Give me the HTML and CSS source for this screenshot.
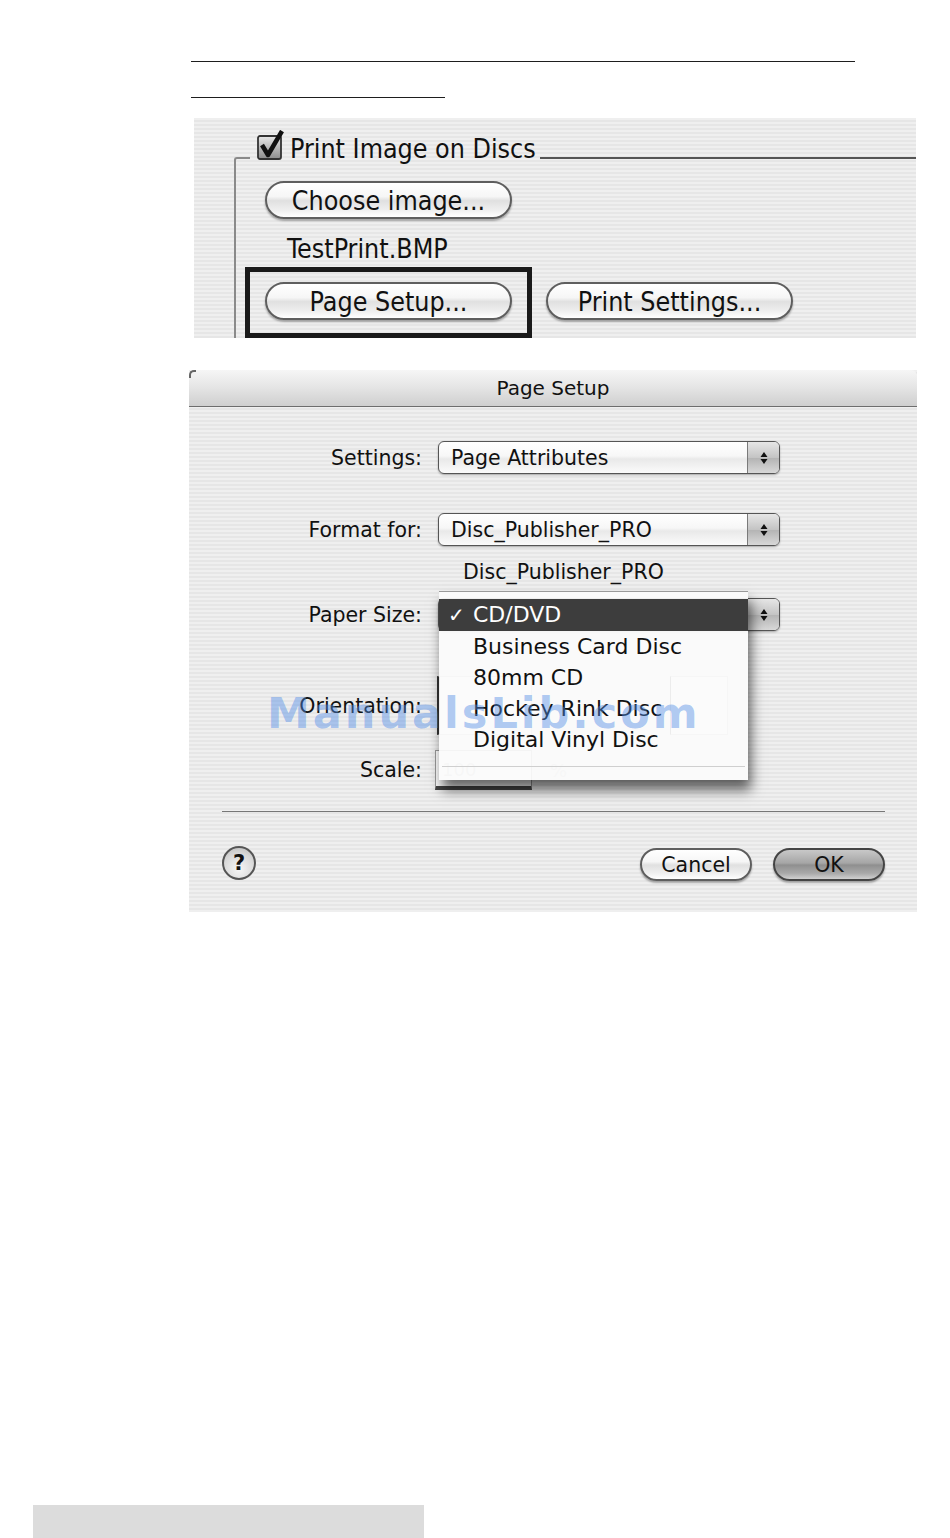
FILE: index.html
```html
<!DOCTYPE html>
<html lang="en">

<head>
    <meta charset="UTF-8">
    <meta name="viewport" content="width=device-width, initial-scale=1.0">
    <title>Print Image on Discs - Page Setup</title>
    <link rel="stylesheet" href="styles.css">
</head>

<body>
    <div class="page">
        <div class="rule rule-long"></div>
        <div class="rule rule-short"></div>

        <!-- first screenshot: print panel -->
        <div class="shot shot-print">
            <div class="group-head">
                <span class="group-corner"></span>
                <span class="checkbox">
                    <svg width="28" height="30" viewBox="0 0 28 30">
                        <defs>
                            <linearGradient id="cbFill" x1="0" y1="0" x2="0" y2="1">
                                <stop offset="0" stop-color="#e8e8e8" />
                                <stop offset="0.5" stop-color="#b9b9b9" />
                                <stop offset="1" stop-color="#8c8c8c" />
                            </linearGradient>
                        </defs>
                        <rect x="1" y="6" width="23" height="23" rx="2" fill="url(#cbFill)" stroke="#333" stroke-width="1.8" />
                        <path d="M5 15 L11 25 L25 1" fill="none" stroke="#111" stroke-width="4.5" stroke-linejoin="round" />
                    </svg>
                </span>
                <span class="group-title">Print Image on Discs</span>
                <span class="group-line"></span>
            </div>
            <div class="group-body">
                <button class="aqua-btn wide">Choose image...</button>
                <div class="file-name">TestPrint.BMP</div>
                <div class="btn-row">
                    <div class="highlight">
                        <button class="aqua-btn wide">Page Setup...</button>
                    </div>
                    <button class="aqua-btn wide">Print Settings...</button>
                </div>
            </div>
        </div>

        <!-- second screenshot: page setup sheet -->
        <div class="dialog shot">
            <div class="titlebar">Page Setup</div>
            <div class="dialog-body">
                <div class="form-row">
                    <label>Settings:</label>
                    <div class="popup">
                        <span class="popup-text">Page Attributes</span>
                        <span class="stepper"><svg width="10" height="16" viewBox="0 0 10 16"><path d="M5 2 L8.5 7 L1.5 7 Z M1.5 9 L8.5 9 L5 14 Z" fill="#111" /></svg></span>
                    </div>
                </div>
                <div class="form-row row-format">
                    <label>Format for:</label>
                    <div class="popup">
                        <span class="popup-text">Disc_Publisher_PRO</span>
                        <span class="stepper"><svg width="10" height="16" viewBox="0 0 10 16"><path d="M5 2 L8.5 7 L1.5 7 Z M1.5 9 L8.5 9 L5 14 Z" fill="#111" /></svg></span>
                    </div>
                </div>
                <div class="printer-note">Disc_Publisher_PRO</div>
                <div class="form-row row-paper">
                    <label>Paper Size:</label>
                    <div class="popup">
                        <span class="popup-text"></span>
                        <span class="stepper"><svg width="10" height="16" viewBox="0 0 10 16"><path d="M5 2 L8.5 7 L1.5 7 Z M1.5 9 L8.5 9 L5 14 Z" fill="#111" /></svg></span>
                    </div>
                </div>
                <div class="form-row row-orient">
                    <label>Orientation:</label>
                    <div class="orient-group">
                        <span class="orient-box"></span>
                        <span class="orient-box small"></span>
                    </div>
                </div>
                <div class="form-row row-scale">
                    <label>Scale:</label>
                    <div class="scale-field">
                        <span class="scale-input">100</span>
                        <span class="scale-unit">%</span>
                    </div>
                </div>
                <div class="separator"></div>
                <div class="dialog-buttons">
                    <button class="help-btn">?</button>
                    <span class="spacer"></span>
                    <button class="aqua-btn small">Cancel</button>
                    <button class="aqua-btn small default">OK</button>
                </div>
            </div>

            <!-- open paper size menu -->
            <ul class="menu">
                <li class="menu-item selected"><span class="check">✓</span>CD/DVD</li>
                <li class="menu-item"><span class="check"></span>Business Card Disc</li>
                <li class="menu-item"><span class="check"></span>80mm CD</li>
                <li class="menu-item"><span class="check"></span>Hockey Rink Disc</li>
                <li class="menu-item"><span class="check"></span>Digital Vinyl Disc</li>
                <li class="menu-rule"></li>
            </ul>

            <div class="watermark">ManualsLib.com</div>
        </div>

        <div class="footer-bar"></div>
    </div>
</body>

</html>
```

FILE: styles.css
```css
* {
    box-sizing: border-box;
}

body {
    margin: 0;
    background: #fff;
    font-family: "DejaVu Sans", sans-serif;
    color: #111;
}

.page {
    display: flex;
    flex-direction: column;
    min-height: 100vh;
}

/* blank underline lines at the top */
.rule {
    height: 1px;
    background: #1e1e1e;
    margin-left: 191px;
}

.rule-long {
    margin-top: 61px;
    width: 664px;
}

.rule-short {
    margin-top: 35px;
    width: 254px;
}

.shot {
    background: repeating-linear-gradient(to bottom, #efefef 0, #efefef 2px, #e6e6e6 2px, #e6e6e6 4px);
}

/* print panel */
.shot-print {
    margin: 20px 0 0 194px;
    width: 722px;
    height: 220px;
    overflow: hidden;
    font-family: "DejaVu Sans Condensed", "DejaVu Sans", sans-serif;
    font-stretch: condensed;
    font-size: 26.6px;
}

.group-head {
    display: flex;
    align-items: flex-end;
    height: 30px;
    margin-top: 12px;
    padding-left: 40px;
}

.group-corner {
    width: 16px;
    height: 3px;
    border-top: 2px solid #8a8a8a;
    border-left: 2px solid #8a8a8a;
    border-top-left-radius: 6px;
}

.checkbox {
    margin-left: 7px;
    width: 28px;
    height: 30px;
}

.checkbox svg {
    display: block;
}

.group-title {
    margin-left: 5px;
    line-height: 30px;
    position: relative;
    top: 4px;
}

.group-line {
    flex: 1;
    height: 3px;
    border-top: 2px solid #555;
    margin-left: 4px;
}

.group-body {
    margin-left: 40px;
    border-left: 2px solid #8a8a8a;
    padding-left: 29px;
    padding-top: 21px;
    height: 178px;
}

.aqua-btn {
    display: flex;
    align-items: center;
    justify-content: center;
    padding: 0;
    border: 2px solid #5e5e5e;
    border-radius: 19px;
    background: linear-gradient(to bottom, #ffffff 0%, #f6f6f6 40%, #e0e0e0 52%, #efefef 80%, #ffffff 100%);
    box-shadow: 0 2px 2px rgba(0, 0, 0, 0.3);
    font: inherit;
    color: #111;
}

.aqua-btn.wide {
    width: 247px;
    height: 38px;
}

.file-name {
    margin-top: 15px;
    padding-left: 22px;
    line-height: 30px;
}

.btn-row {
    display: flex;
    align-items: flex-start;
    gap: 14px;
    margin-top: 3px;
    margin-left: -20px;
}

.highlight {
    border: 5px solid #1a1a1a;
    padding: 10px 15px 13px;
}

.btn-row > .aqua-btn {
    margin-top: 15px;
}

/* page setup sheet */
.dialog {
    position: relative;
    margin: 32px 0 0 189px;
    width: 728px;
    height: 542px;
    font-size: 20.5px;
}

.titlebar {
    position: relative;
    height: 37px;
    display: flex;
    align-items: center;
    justify-content: center;
    background: linear-gradient(to bottom, #f6f6f6 0%, #e4e4e4 50%, #cfcfcf 100%);
    border-bottom: 1px solid #6d6d6d;
    border-radius: 6px 6px 0 0;
    font-size: 20px;
}

.titlebar::before {
    content: "";
    position: absolute;
    left: 0;
    top: 0;
    width: 5px;
    height: 6px;
    border-top: 2px solid #666;
    border-left: 2px solid #666;
    border-top-left-radius: 5px;
}

.dialog-body {
    padding-top: 34px;
}

.form-row {
    display: grid;
    grid-template-columns: 233px 342px;
    column-gap: 16px;
    align-items: center;
}

.form-row label {
    text-align: right;
}

.popup {
    height: 33px;
    display: flex;
    align-items: center;
    border: 1.5px solid #555;
    border-radius: 6px;
    background: linear-gradient(to bottom, #ffffff 0%, #f7f7f7 45%, #e9e9e9 55%, #fbfbfb 100%);
    box-shadow: 0 1px 2px rgba(0, 0, 0, 0.3);
}

.popup-text {
    flex: 1;
    padding-left: 12px;
}

.stepper {
    width: 32px;
    height: 100%;
    display: flex;
    align-items: center;
    justify-content: center;
    border-left: 1px solid #7a7a7a;
    border-radius: 0 5px 5px 0;
    background: linear-gradient(to bottom, #e6e6e6 0%, #c4c4c4 50%, #b4b4b4 52%, #d8d8d8 100%);
}

.row-format {
    margin-top: 39px;
}

.printer-note {
    margin: 14px 0 0 274px;
    height: 24px;
    line-height: 24px;
}

.row-paper {
    margin-top: 14px;
}

.row-orient {
    margin-top: 45px;
}

.orient-group {
    display: flex;
    gap: 138px;
    margin-left: -1px;
}

.orient-box {
    width: 95px;
    height: 59px;
    border: 1px solid #bbb;
    border-left: 3px solid #333;
    background: #f3f3f3;
}

.orient-box.small {
    width: 58px;
    border-left-width: 1px;
}

.row-scale {
    margin-top: 15px;
}

.scale-field {
    display: flex;
    align-items: center;
    margin-left: -3px;
}

.scale-input {
    width: 97px;
    height: 40px;
    padding: 8px 6px;
    border: 1px solid #999;
    border-bottom: 4px solid #444;
    background: #fff;
    color: #bbb;
    font-size: 18px;
}

.scale-unit {
    margin-left: 18px;
    color: #bbb;
    font-size: 18px;
}

.separator {
    margin: 21px 32px 0 33px;
    height: 1px;
    background: #777;
}

.dialog-buttons {
    display: flex;
    align-items: center;
    gap: 21px;
    height: 33px;
    margin-top: 36px;
    padding: 0 32px 0 33px;
}

.spacer {
    flex: 1;
}

.help-btn {
    width: 34px;
    height: 34px;
    margin-top: -3px;
    padding: 0;
    border: 2px solid #555;
    border-radius: 50%;
    background: radial-gradient(circle at 50% 70%, #f6f6f6 0%, #d8d8d8 60%, #b8b8b8 100%);
    font-family: "DejaVu Sans", sans-serif;
    font-weight: bold;
    font-size: 21px;
    color: #111;
}

.aqua-btn.small {
    width: 112px;
    height: 33px;
    border-radius: 17px;
    font-size: 20.5px;
}

.aqua-btn.default {
    background: linear-gradient(to bottom, #c8c8c8 0%, #a6a6a6 45%, #8f8f8f 52%, #a9a9a9 80%, #d0d0d0 100%);
    border-color: #444;
}

/* open popup menu over the sheet */
.menu {
    position: absolute;
    left: 250px;
    top: 221px;
    width: 309px;
    height: 189px;
    margin: 0;
    padding: 7px 0 0;
    list-style: none;
    background: rgba(251, 251, 251, 0.93);
    border-top: 1px solid #9a9a9a;
    box-shadow: 3px 10px 12px rgba(0, 0, 0, 0.6);
    font-size: 22px;
}

.menu-item {
    height: 31px;
    line-height: 31px;
    padding-left: 9px;
    color: #111;
}

.menu-item.selected {
    height: 32px;
    line-height: 32px;
    background: #3d3d3d;
    color: #fff;
}

.check {
    display: inline-block;
    width: 25px;
    font-size: 20px;
    font-weight: bold;
}

.menu-rule {
    height: 1px;
    margin: 11px 3px 0;
    background: #cfcfcf;
}

.watermark {
    position: absolute;
    left: 78px;
    top: 322px;
    font-family: "DejaVu Sans", sans-serif;
    font-weight: bold;
    font-size: 43px;
    line-height: 43px;
    letter-spacing: 3px;
    color: rgba(80, 140, 230, 0.45);
    white-space: nowrap;
}

.footer-bar {
    margin-top: auto;
    margin-left: 33px;
    width: 391px;
    height: 33px;
    background: #dcdcdc;
}
```
